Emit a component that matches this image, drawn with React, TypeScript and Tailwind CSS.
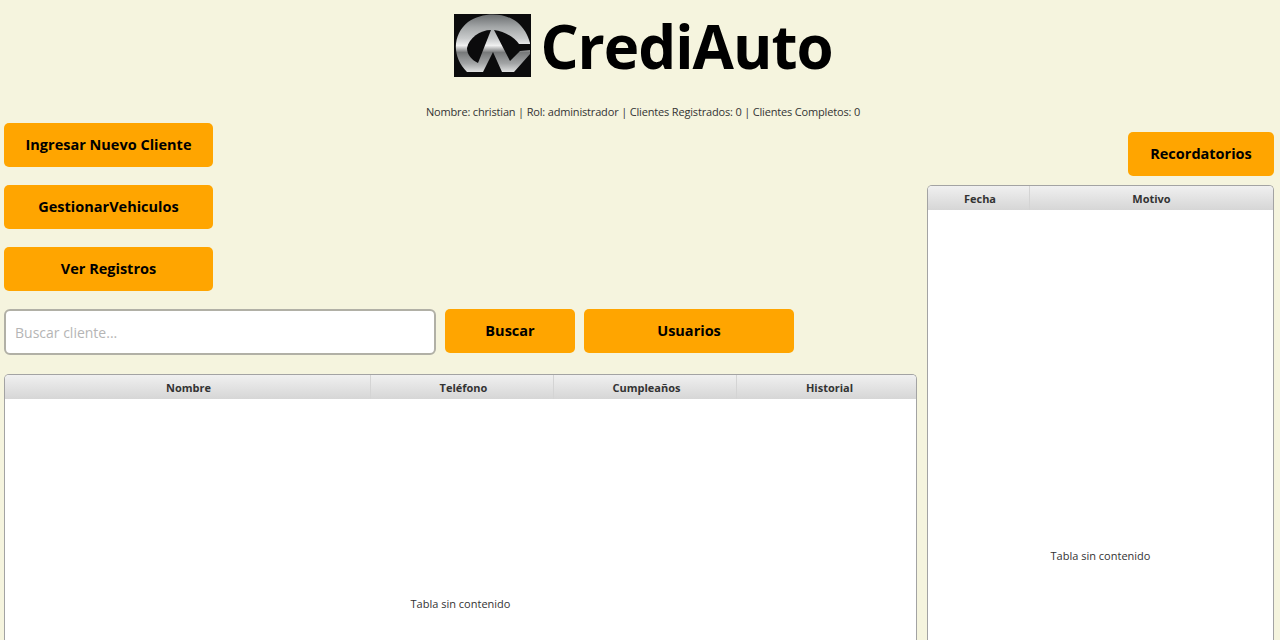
const Logo = () => (
  <svg width="77" height="63" viewBox="0 0 77 63" className="shrink-0">
    <defs>
      <linearGradient id="steel" x1="0" y1="0" x2="0" y2="1">
        <stop offset="0" stopColor="#6a6d6f" />
        <stop offset="0.22" stopColor="#a4a7a8" />
        <stop offset="0.42" stopColor="#c9cbcc" />
        <stop offset="0.54" stopColor="#f0f0f0" />
        <stop offset="0.66" stopColor="#77797a" />
        <stop offset="0.85" stopColor="#a2a4a5" />
        <stop offset="1" stopColor="#e0e1e1" />
      </linearGradient>
    </defs>
    <rect width="77" height="63" fill="#0b0b0c" />
    <path
      d="M13 58 C-3 42 -1 20 14 8 C28 -2 50 -2 63 8 C70 14 74 21 76 29 L76 40 L60 58 L48 58 L39 38 L29 58 Z"
      fill="url(#steel)"
    />
    <path d="M37 16 C26 16 15 24 13 34 C13 41 18 46 24 49 Z" fill="#0b0b0c" />
    <path d="M40 16 C50 17 60 23 65 30 L77 30 L77 36 L66 37 L56 47 Z" fill="#0b0b0c" />
  </svg>
);

const OrangeButton = ({ label, className }: { label: string; className: string }) => (
  <button className={`h-[44px] rounded-[5px] bg-[#ffa500] pb-[1px] text-[14.5px] font-bold text-black ${className}`}>
    {label}
  </button>
);

const EmptyTable = ({
  columns,
  className,
  bodyClass,
}: {
  columns: { name: string; width: string }[];
  className: string;
  bodyClass: string;
}) => (
  <div className={`overflow-hidden rounded-t-[5px] border border-b-0 border-[#a3a3a3] bg-white ${className}`}>
    <div className="flex h-[24px] bg-gradient-to-b from-[#f0f0f0] to-[#d6d6d6]">
      {columns.map((col) => (
        <div
          key={col.name}
          className={`flex items-center justify-center border-r border-[#d4d4d4] pt-[2px] text-[11px] font-bold text-[#333333] last:border-r-0 ${col.width}`}
        >
          {col.name}
        </div>
      ))}
    </div>
    <div className={`flex justify-center text-[11px] text-[#333333] ${bodyClass}`}>Tabla sin contenido</div>
  </div>
);

export default function App() {
  return (
    <main className="h-[640px] w-[1280px] overflow-hidden bg-[#f5f4de] pl-[4px] pr-[6px] font-['Open_Sans',sans-serif]">
      <header className="flex h-[123px] flex-col items-center pl-[8px]">
        <div className="mt-[14px] flex h-[63px] items-center gap-[9px] pl-[1px]">
          <Logo />
          <span className="text-[60px] leading-none font-bold tracking-[-1px] text-black">CrediAuto</span>
        </div>
        <p className="mt-[27px] text-[11px] leading-[16px] tracking-[-0.17px] text-[#333333]">
          Nombre: christian | Rol: administrador | Clientes Registrados: 0 | Clientes Completos: 0
        </p>
      </header>

      <div className="flex gap-[10px]">
        <section className="w-[913px] shrink-0">
          <div className="flex flex-col gap-[18px]">
            <OrangeButton label="Ingresar Nuevo Cliente" className="w-[209px]" />
            <OrangeButton label="GestionarVehiculos" className="w-[209px]" />
            <OrangeButton label="Ver Registros" className="w-[209px]" />
          </div>
          <div className="mt-[18px] flex items-start">
            <input
              placeholder="Buscar cliente..."
              className="h-[46px] w-[432px] rounded-[6px] border-2 border-[#b1b0a6] bg-white px-[9px] text-[14px] outline-none placeholder:text-[#b5b5b5]"
            />
            <OrangeButton label="Buscar" className="ml-[9px] w-[130px]" />
            <OrangeButton label="Usuarios" className="ml-[9px] w-[210px]" />
          </div>
          <EmptyTable
            className="mt-[19px] h-[300px]"
            bodyClass="pt-[197px]"
            columns={[
              { name: "Nombre", width: "w-[366px] pl-[2px]" },
              { name: "Teléfono", width: "w-[183px] pl-[3px]" },
              { name: "Cumpleaños", width: "w-[183px] pl-[3px]" },
              { name: "Historial", width: "flex-1 pl-[6px]" },
            ]}
          />
        </section>

        <aside className="flex flex-1 flex-col items-end pt-[9px]">
          <OrangeButton label="Recordatorios" className="w-[146px]" />
          <EmptyTable
            className="mt-[9px] h-[500px] w-full"
            bodyClass="pt-[338px]"
            columns={[
              { name: "Fecha", width: "w-[102px] pl-[3px]" },
              { name: "Motivo", width: "flex-1" },
            ]}
          />
        </aside>
      </div>
    </main>
  );
}
